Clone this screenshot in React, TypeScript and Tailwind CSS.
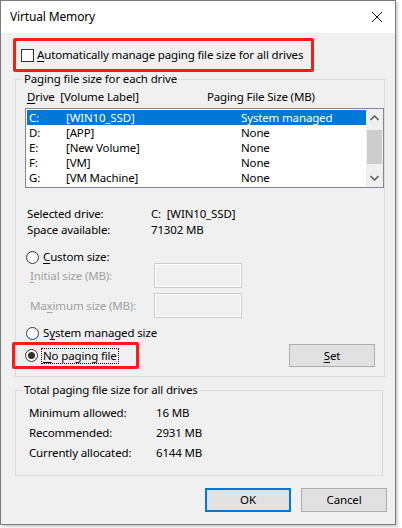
import React from 'react';

const drives = [
  { letter: 'C:', label: '[WIN10_SSD]', size: 'System managed' },
  { letter: 'D:', label: '[APP]', size: 'None' },
  { letter: 'E:', label: '[New Volume]', size: 'None' },
  { letter: 'F:', label: '[VM]', size: 'None' },
  { letter: 'G:', label: '[VM Machine]', size: 'None' },
];

const totals = [
  { name: 'Minimum allowed:', value: '16 MB' },
  { name: 'Recommended:', value: '2931 MB' },
  { name: 'Currently allocated:', value: '6144 MB' },
];

const Radio = ({ checked = false }: { checked?: boolean }) => (
  <span className="w-[13px] h-[13px] rounded-full border border-[#333] bg-white flex items-center justify-center shrink-0">
    {checked && <span className="w-[7px] h-[7px] rounded-full bg-[#333]" />}
  </span>
);

const SizeField = ({ label }: { label: React.ReactNode }) => (
  <div className="flex items-center h-[25px]">
    <span className="w-[129px] pl-[5px] text-[#a0a0a0]">{label}</span>
    <div className="w-[88px] h-[25px] border border-[#cccccc] bg-[#f0f0f0]">
      <div className="w-full h-full border border-white" />
    </div>
  </div>
);

export default function App() {
  return (
    <div
      className="w-[402px] h-[528px] bg-white text-[11.5px] tracking-[-0.15px] leading-[16px] text-black whitespace-nowrap"
      style={{ fontFamily: '"Noto Sans", "Open Sans", sans-serif' }}
    >
      <div className="w-[396px] h-[525px] flex flex-col border border-[#7a7a7a] bg-[#f0f0f0] shadow-[2px_2px_2px_rgba(0,0,0,0.18)]">
        {/* Title bar */}
        <div className="h-[32px] bg-white flex items-center justify-between pl-[9px] pr-[10px] shrink-0">
          <span className="text-[12px]">Virtual Memory</span>
          <svg width="12" height="12" viewBox="0 0 12 12" className="mr-[2px]">
            <path d="M1 1 L11 11 M11 1 L1 11" stroke="#111" strokeWidth="1" fill="none" />
          </svg>
        </div>

        <div className="flex flex-col pl-[14px] pr-[13px]">
          {/* Automatic checkbox */}
          <div className="mt-[5px] -ml-[2px] w-[301px] h-[34px] border-[3px] border-[#ff1a1a] rounded-[2px] flex items-center pl-[5px]">
            <span className="w-[13px] h-[13px] border border-[#333] bg-white shrink-0" />
            <span className="ml-[3px]">
              <u className="underline-offset-2">A</u>utomatically manage paging file size for all drives
            </span>
          </div>

          {/* Per-drive group */}
          <fieldset className="border border-[#dcdcdc] w-[368px] pb-[7px]">
            <legend className="ml-[7px] px-[1px] leading-[14px]">Paging file size for each drive</legend>

            <div className="pl-[9px]">
              <div className="mt-[3px] flex pl-[2px]">
                <span className="w-[180px]">
                  <u className="underline-offset-2">D</u>rive&nbsp;&nbsp;[Volume Label]
                </span>
                <span>Paging File Size (MB)</span>
              </div>

              <div className="mt-[3px] w-[359px] h-[80px] border border-[#828790] bg-white flex">
                <div className="flex-1 pt-[1px] pl-[1px]">
                  {drives.map((d, i) => (
                    <div
                      key={d.letter}
                      className={`h-[15px] leading-[15px] flex ${i === 0 ? 'bg-[#0078d7] text-white' : ''}`}
                    >
                      <span className="w-[39px] pl-[2px]">{d.letter}</span>
                      <span className="w-[175px]">{d.label}</span>
                      <span>{d.size}</span>
                    </div>
                  ))}
                </div>
                <div className="w-[17px] bg-[#f0f0f0] flex flex-col items-center justify-between py-[6px]">
                  <svg width="9" height="6" viewBox="0 0 9 6">
                    <path d="M0.5 5 L4.5 1 L8.5 5" stroke="#606060" strokeWidth="1.6" fill="none" />
                  </svg>
                  <div className="w-[15px] h-[34px] bg-[#cdcdcd] -mt-[2px]" />
                  <svg width="9" height="6" viewBox="0 0 9 6">
                    <path d="M0.5 1 L4.5 5 L8.5 1" stroke="#606060" strokeWidth="1.6" fill="none" />
                  </svg>
                </div>
              </div>

              <div className="mt-[18px] flex pl-[2px]">
                <span className="w-[124px]">Selected drive:</span>
                <span>C:&nbsp;&nbsp;[WIN10_SSD]</span>
              </div>
              <div className="flex pl-[2px]">
                <span className="w-[124px]">Space available:</span>
                <span>71302 MB</span>
              </div>

              <div className="mt-[11px] flex items-center pl-[1px]">
                <Radio />
                <span className="ml-[4px]">
                  <u className="underline-offset-2">C</u>ustom size:
                </span>
              </div>

              <div className="-mt-[2px] flex flex-col gap-[5px]">
                <SizeField label={<><u className="underline-offset-2">I</u>nitial size (MB):</>} />
                <SizeField label={<>Ma<u className="underline-offset-2">x</u>imum size (MB):</>} />
              </div>

              <div className="mt-[7px] flex items-center pl-[1px]">
                <Radio />
                <span className="ml-[4px]">
                  S<u className="underline-offset-2">y</u>stem managed size
                </span>
              </div>

              <div className="mt-[1px] flex items-center justify-between">
                <div className="-ml-[13px] w-[127px] h-[27px] border-[3px] border-[#ff1a1a] rounded-[2px] flex items-center pl-[10px]">
                  <Radio checked />
                  <span className="ml-[3px] px-[1px] border border-dotted border-black leading-[14px]">
                    <u className="underline-offset-2">N</u>o paging file
                  </span>
                </div>
                <button className="mr-[9px] w-[86px] h-[23px] border border-[#adadad] bg-[#e1e1e1]">
                  <u className="underline-offset-2">S</u>et
                </button>
              </div>
            </div>
          </fieldset>

          {/* Totals group */}
          <fieldset className="mt-[5px] border border-[#dcdcdc] w-[368px] pb-[14px]">
            <legend className="ml-[7px] px-[1px]">Total paging file size for all drives</legend>
            <div className="pl-[13px] mt-[7px] flex flex-col gap-[4px]">
              {totals.map((t) => (
                <div key={t.name} className="flex">
                  <span className="w-[127px]">{t.name}</span>
                  <span>{t.value}</span>
                </div>
              ))}
            </div>
          </fieldset>

          {/* Dialog buttons */}
          <div className="mt-[12px] flex justify-end gap-[10px] -mr-[5px]">
            <button className="w-[86px] h-[24px] border-2 border-[#0078d7] bg-[#e1e1e1]">OK</button>
            <button className="w-[86px] h-[24px] border border-[#adadad] bg-[#e1e1e1]">Cancel</button>
          </div>
        </div>
      </div>
    </div>
  );
}
